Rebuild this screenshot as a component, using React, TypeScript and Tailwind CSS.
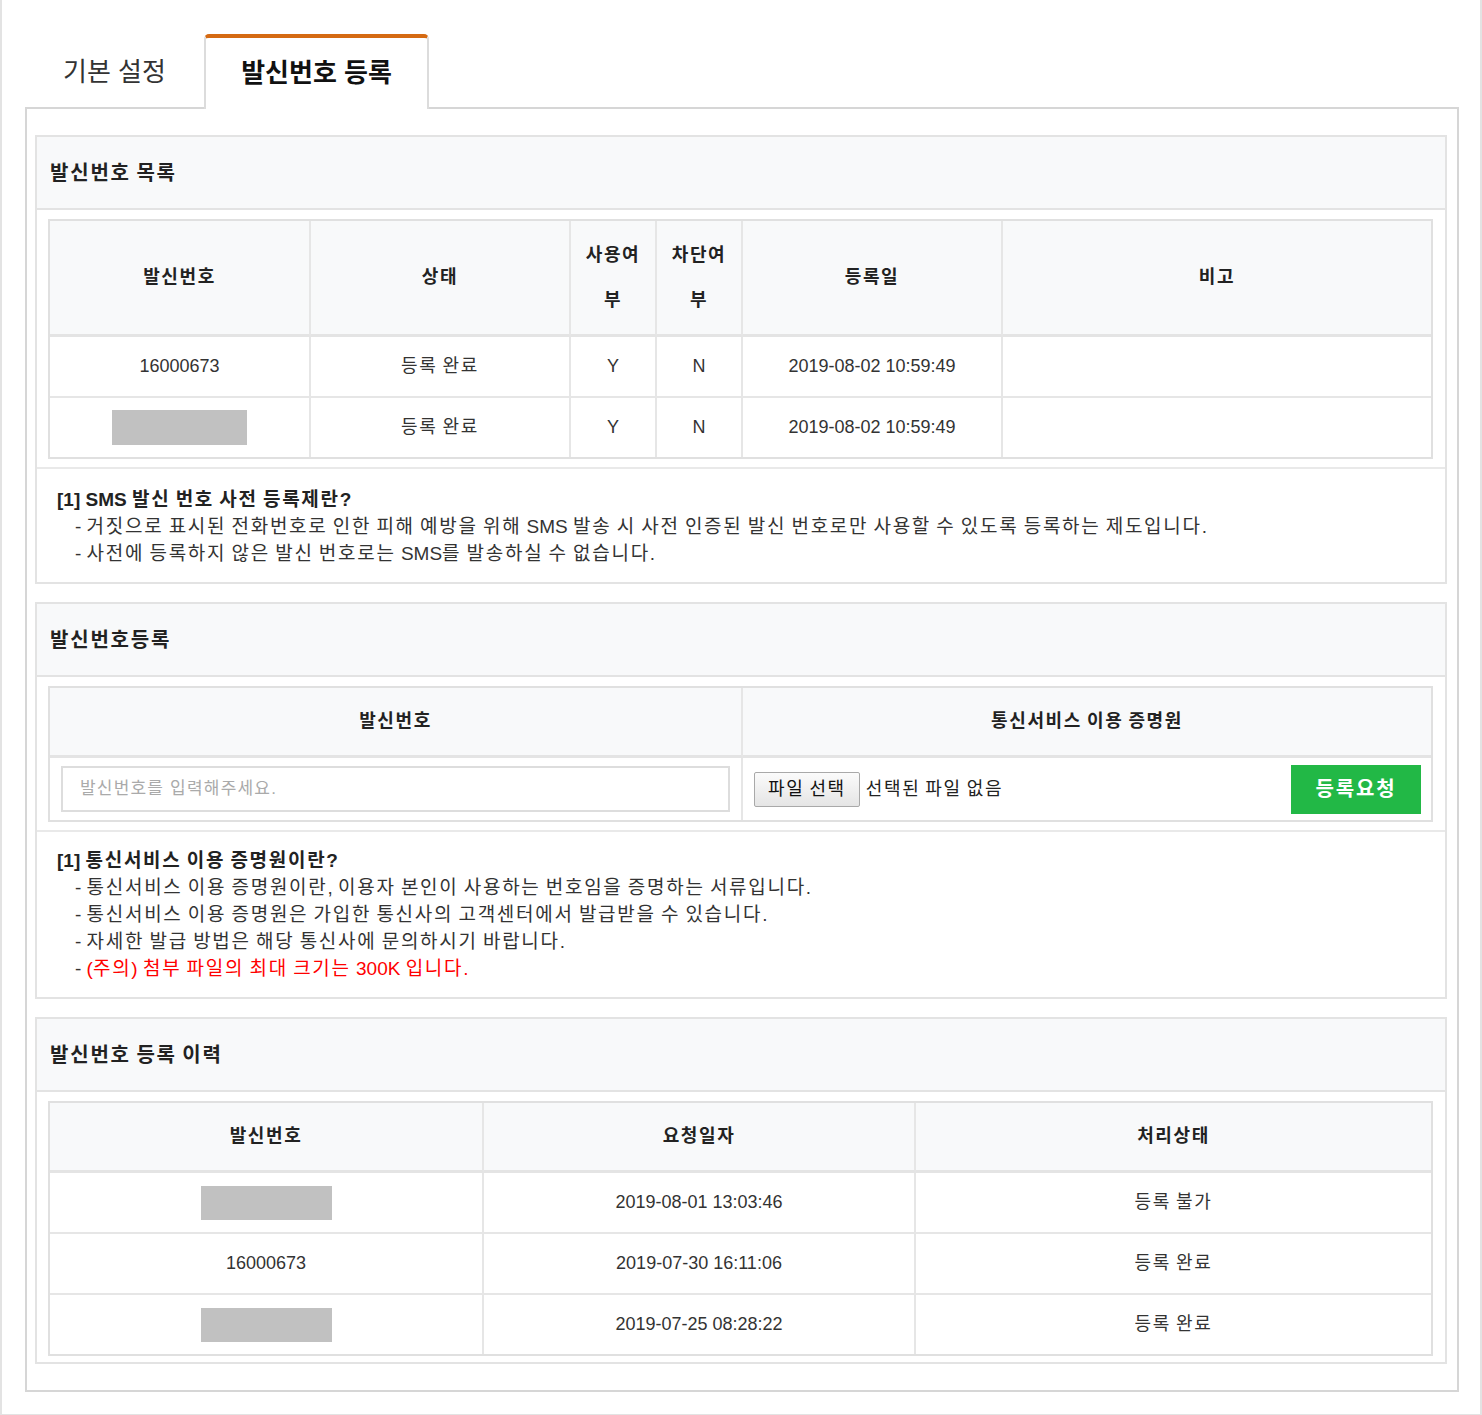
import React from "react";

const FONT = "font-['Liberation_Sans','Noto_Sans_CJK_KR',sans-serif]";
const HANGUL = /([\uAC00-\uD7A3\u3131-\u318E]+)/;

function T({ s }: { s: string }) {
  const parts = s.split(HANGUL);
  return (
    <span>
      {parts.map((p, i) =>
        i % 2 === 1 ? (
          <span key={i} className="tracking-[0.09em]">
            {p}
          </span>
        ) : (
          <React.Fragment key={i}>{p}</React.Fragment>
        )
      )}
    </span>
  );
}

function Panel({ title, children }: { title: string; children: React.ReactNode }) {
  return (
    <div className="border-2 border-[#e3e3e3] bg-white">
      <div className="h-[73px] bg-[#f8f9fa] border-b-2 border-[#e3e3e3] flex items-center pl-[13px] text-[20px] font-bold text-[#222]">
        <T s={title} />
      </div>
      {children}
    </div>
  );
}

function Gray({ w, h }: { w: number; h: number }) {
  return <div className="bg-[#c1c1c1] mx-auto" style={{ width: w, height: h }} />;
}

function Notes({ title, lines, tight }: { title: string; lines: React.ReactNode[]; tight?: boolean }) {
  return (
    <div
      className={`border-t-2 border-[#e9e9e9] pl-[20px] text-[19px] leading-[27px] text-[#333] ${
        tight ? "pt-[15px] pb-[15px]" : "pt-[17px] pb-[15px]"
      }`}
    >
      <div className="font-bold text-[19px] text-[#222]">
        <T s={title} />
      </div>
      {lines.map((l, i) => (
        <div key={i} className="pl-[18px]">
          - {l}
        </div>
      ))}
    </div>
  );
}

export default function App() {
  const hCell =
    "bg-[#f8f9fa] flex items-center justify-center text-center font-bold text-[18px] text-[#222] border-b-[3px] border-[#e4e4e4]";
  const bCell = "flex items-center justify-center text-[18px] text-[#333]";
  const mid = `${bCell} h-[61px] border-b-2 border-[#e6e6e6]`;
  const last = `${bCell} h-[59px] border-[#e6e6e6]`;
  return (
    <div className={`${FONT} w-[1482px] min-h-[1415px] border-x-2 border-b-2 border-[#e3e3e3] bg-white`}>
      <div className="pl-[23px] pr-[21px] pt-[34px] pb-[22px]">
        <div className="flex items-start h-[73px]">
          <div className="w-[179px] h-[73px] pt-[3px] flex items-center justify-center text-[26px] text-[#333]">
            기본 설정
          </div>
          <div className="relative z-10 w-[225px] h-[75px] bg-white border-x-2 border-[#dcdcdc] border-t-4 border-t-[#d56a12] rounded-t-[5px] flex items-center justify-center text-[26px] font-bold text-[#111]">
            발신번호 등록
          </div>
        </div>
        <div className="border-2 border-[#d6d6d6] pl-[8px] pr-[10px] pt-[26px] pb-[26px] flex flex-col gap-[18px]">
          {/* Section 1 */}
          <Panel title="발신번호 목록">
            <div className="pl-[11px] pr-[12px] pt-[9px] pb-[8px]">
              <div className="border-2 border-[#e0e0e0] grid grid-cols-[261px_260px_86px_86px_260px_1fr]">
                <div className={`${hCell} h-[116px] border-r-2 border-r-[#e6e6e6]`}><T s="발신번호" /></div>
                <div className={`${hCell} h-[116px] border-r-2 border-r-[#e6e6e6]`}><T s="상태" /></div>
                <div className={`${hCell} h-[116px] border-r-2 border-r-[#e6e6e6] leading-[45px]`}>
                  <span>
                    <T s="사용여" />
                    <br />
                    <T s="부" />
                  </span>
                </div>
                <div className={`${hCell} h-[116px] border-r-2 border-r-[#e6e6e6] leading-[45px]`}>
                  <span>
                    <T s="차단여" />
                    <br />
                    <T s="부" />
                  </span>
                </div>
                <div className={`${hCell} h-[116px] border-r-2 border-r-[#e6e6e6]`}><T s="등록일" /></div>
                <div className={`${hCell} h-[116px]`}><T s="비고" /></div>

                <div className={`${mid} border-r-2`}>16000673</div>
                <div className={`${mid} border-r-2`}><T s="등록 완료" /></div>
                <div className={`${mid} border-r-2`}>Y</div>
                <div className={`${mid} border-r-2`}>N</div>
                <div className={`${mid} border-r-2`}>2019-08-02 10:59:49</div>
                <div className={mid}></div>

                <div className={`${last} border-r-2`}><Gray w={135} h={35} /></div>
                <div className={`${last} border-r-2`}><T s="등록 완료" /></div>
                <div className={`${last} border-r-2`}>Y</div>
                <div className={`${last} border-r-2`}>N</div>
                <div className={`${last} border-r-2`}>2019-08-02 10:59:49</div>
                <div className={last}></div>
              </div>
            </div>
            <Notes
              title="[1] SMS 발신 번호 사전 등록제란?"
              lines={[
                <T s="거짓으로 표시된 전화번호로 인한 피해 예방을 위해 SMS 발송 시 사전 인증된 발신 번호로만 사용할 수 있도록 등록하는 제도입니다." />,
                <T s="사전에 등록하지 않은 발신 번호로는 SMS를 발송하실 수 없습니다." />,
              ]}
            />
          </Panel>

          {/* Section 2 */}
          <Panel title="발신번호등록">
            <div className="pl-[11px] pr-[12px] pt-[9px] pb-[8px]">
              <div className="border-2 border-[#e0e0e0] grid grid-cols-[693px_1fr]">
                <div className={`${hCell} h-[70px] border-r-2 border-r-[#e6e6e6]`}><T s="발신번호" /></div>
                <div className={`${hCell} h-[70px]`}><T s="통신서비스 이용 증명원" /></div>
                <div className="h-[62px] border-r-2 border-[#e6e6e6] flex items-center pl-[11px] pr-[11px]">
                  <input
                    type="text"
                    placeholder="발신번호를 입력해주세요."
                    className="w-full h-[46px] border-2 border-[#dddddd] pl-[17px] text-[17px] tracking-[1.2px] text-[#333] placeholder:text-[#aaaaaa] outline-none"
                  />
                </div>
                <div className="h-[62px] flex items-center pl-[11px] pr-[10px]">
                  <div className="h-[35px] px-[13px] flex items-center border border-[#a9a9a9] rounded-[2px] bg-gradient-to-b from-[#fbfbfb] to-[#e5e5e5] text-[18px] text-[#111]">
                    <T s="파일 선택" />
                  </div>
                  <span className="ml-[6px] text-[18px] text-[#222]">
                    <T s="선택된 파일 없음" />
                  </span>
                  <div className="ml-auto w-[130px] h-[49px] bg-[#22b846] flex items-center justify-center text-white font-bold text-[20px]">
                    <T s="등록요청" />
                  </div>
                </div>
              </div>
            </div>
            <Notes
              tight
              title="[1] 통신서비스 이용 증명원이란?"
              lines={[
                <T s="통신서비스 이용 증명원이란, 이용자 본인이 사용하는 번호임을 증명하는 서류입니다." />,
                <T s="통신서비스 이용 증명원은 가입한 통신사의 고객센터에서 발급받을 수 있습니다." />,
                <T s="자세한 발급 방법은 해당 통신사에 문의하시기 바랍니다." />,
                <span className="text-[#ff0000]">
                  <T s="(주의) 첨부 파일의 최대 크기는 300K 입니다." />
                </span>,
              ]}
            />
          </Panel>

          {/* Section 3 */}
          <Panel title="발신번호 등록 이력">
            <div className="pl-[11px] pr-[12px] pt-[9px] pb-[6px]">
              <div className="border-2 border-[#e0e0e0] grid grid-cols-[434px_432px_1fr]">
                <div className={`${hCell} h-[70px] border-r-2 border-r-[#e6e6e6]`}><T s="발신번호" /></div>
                <div className={`${hCell} h-[70px] border-r-2 border-r-[#e6e6e6]`}><T s="요청일자" /></div>
                <div className={`${hCell} h-[70px]`}><T s="처리상태" /></div>

                <div className={`${mid} border-r-2`}><Gray w={131} h={34} /></div>
                <div className={`${mid} border-r-2`}>2019-08-01 13:03:46</div>
                <div className={mid}><T s="등록 불가" /></div>

                <div className={`${mid} border-r-2`}>16000673</div>
                <div className={`${mid} border-r-2`}>2019-07-30 16:11:06</div>
                <div className={mid}><T s="등록 완료" /></div>

                <div className={`${last} border-r-2`}><Gray w={131} h={34} /></div>
                <div className={`${last} border-r-2`}>2019-07-25 08:28:22</div>
                <div className={last}><T s="등록 완료" /></div>
              </div>
            </div>
          </Panel>
        </div>
      </div>
    </div>
  );
}
